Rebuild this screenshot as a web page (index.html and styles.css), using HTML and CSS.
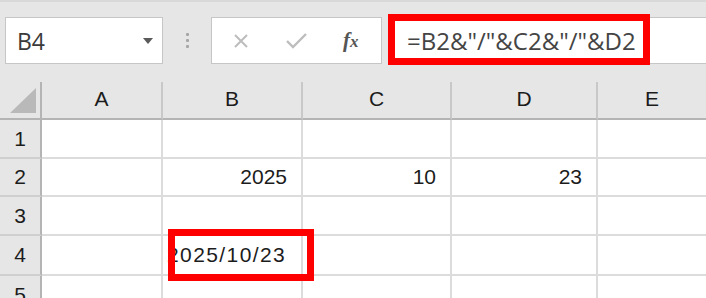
FILE: index.html
```html
<!DOCTYPE html>
<html lang="ja">
<head>
    <meta charset="UTF-8">
    <title>Excel formula</title>
    <link rel="stylesheet" href="styles.css">
</head>
<body>
    <div class="toolbar">
        <div class="name-box">
            <span>B4</span>
            <span class="drop"></span>
        </div>
        <div class="sep">
            <span class="dot"></span>
            <span class="dot"></span>
            <span class="dot"></span>
        </div>
        <div class="fx-box">
            <svg class="icon-x" width="16" height="14" viewBox="0 0 16 14">
                <path d="M2 1 L14 13 M14 1 L2 13" stroke="#bdbdbd" stroke-width="2" fill="none"/>
            </svg>
            <svg class="icon-check" width="21" height="16" viewBox="0 0 21 16">
                <path d="M1 8 L7 14 L20 1" stroke="#bdbdbd" stroke-width="2.4" fill="none"/>
            </svg>
            <span class="fx">f<span class="fx-x">x</span></span>
        </div>
        <div class="formula">
            <span class="formula-text">=B2&amp;"/"&amp;C2&amp;"/"&amp;D2</span>
            <div class="mark mark-formula"></div>
        </div>
    </div>

    <div class="sheet">
        <div class="cell corner"><span class="tri"></span></div>
        <div class="cell col-head">A</div>
        <div class="cell col-head">B</div>
        <div class="cell col-head">C</div>
        <div class="cell col-head">D</div>
        <div class="cell col-head last">E</div>

        <div class="cell row-head">1</div>
        <div class="cell"></div>
        <div class="cell"></div>
        <div class="cell"></div>
        <div class="cell"></div>
        <div class="cell last"></div>

        <div class="cell row-head">2</div>
        <div class="cell"></div>
        <div class="cell num">2025</div>
        <div class="cell num">10</div>
        <div class="cell num">23</div>
        <div class="cell last"></div>

        <div class="cell row-head">3</div>
        <div class="cell"></div>
        <div class="cell"></div>
        <div class="cell"></div>
        <div class="cell"></div>
        <div class="cell last"></div>

        <div class="cell row-head">4</div>
        <div class="cell"></div>
        <div class="cell txt">2025/10/23<div class="mark mark-cell"></div></div>
        <div class="cell"></div>
        <div class="cell"></div>
        <div class="cell last"></div>

        <div class="cell row-head">5</div>
        <div class="cell"></div>
        <div class="cell"></div>
        <div class="cell"></div>
        <div class="cell"></div>
        <div class="cell last"></div>
    </div>
</body>
</html>
```

FILE: styles.css
```css
body {
    margin: 0;
    padding: 0;
    background: #e6e6e6;
    overflow: hidden;
    font-family: "Liberation Sans", Arial, sans-serif;
}

/* formula bar */
.toolbar {
    display: flex;
    align-items: flex-start;
    height: 82px;
    padding-top: 15px;
    box-sizing: border-box;
    border-top: 2px solid #d9d9d9;
}

.name-box {
    display: flex;
    align-items: center;
    margin-left: 5px;
    width: 158px;
    height: 47px;
    padding: 0 9px 0 11px;
    box-sizing: border-box;
    background: #fff;
    border: 1px solid #c6c6c6;
    font-family: "Open Sans", sans-serif;
    font-size: 23px;
    color: #3a3a3a;
}

.drop {
    margin-left: auto;
    width: 0;
    height: 0;
    border-left: 5px solid transparent;
    border-right: 5px solid transparent;
    border-top: 6px solid #5a5a5a;
}

.sep {
    width: 48px;
    height: 47px;
    display: flex;
    flex-direction: column;
    align-items: center;
    justify-content: center;
    gap: 3px;
}

.dot {
    width: 3px;
    height: 3px;
    background: #a6a6a6;
    border-radius: 1px;
}

.fx-box {
    display: flex;
    align-items: center;
    width: 171px;
    height: 47px;
    padding-left: 21px;
    box-sizing: border-box;
    background: #fff;
    border: 1px solid #c6c6c6;
}

.icon-check {
    margin-left: 37px;
}

.fx {
    margin-left: 36px;
    font-family: "Liberation Serif", serif;
    font-style: italic;
    font-weight: bold;
    font-size: 21px;
    color: #555;
}

.fx-x {
    font-size: 17px;
}

.formula {
    position: relative;
    flex: 1;
    display: flex;
    align-items: center;
    margin-left: 6px;
    height: 47px;
    padding-left: 18px;
    box-sizing: border-box;
    background: #fff;
    border: 1px solid #c6c6c6;
    border-right: none;
    font-family: "Open Sans", sans-serif;
    font-size: 24px;
    color: #444;
}

/* red highlight boxes */
.mark {
    position: absolute;
    box-sizing: border-box;
    border: 7px solid #f00;
}

.mark-formula {
    left: -1px;
    top: -4px;
    width: 262px;
    height: 51px;
}

.mark-cell {
    left: 5px;
    top: -7px;
    width: 146px;
    height: 52px;
}

/* sheet grid */
.sheet {
    display: grid;
    grid-template-columns: 42px 121px 140px 149px 146px 1fr;
    grid-template-rows: 38px 39px 38px 39px 40px 40px;
    background: #fff;
    font-size: 21px;
    color: #1c1c1c;
}

.cell {
    display: flex;
    align-items: center;
    box-sizing: border-box;
    border-right: 2px solid #dcdcdc;
    border-bottom: 2px solid #dcdcdc;
    background: #fff;
}

.cell.last {
    border-right: none;
}

.corner {
    position: relative;
    background: #e6e6e6;
    border-right-color: #b4b4b4;
    border-bottom-color: #b4b4b4;
}

.tri {
    position: absolute;
    left: 10px;
    top: 6px;
    width: 26px;
    height: 25px;
    background: #b9b9b9;
    clip-path: polygon(100% 0, 100% 100%, 0 100%);
}

.col-head {
    justify-content: center;
    padding-bottom: 3px;
    background: #e6e6e6;
    border-right-color: #c8c8c8;
    border-bottom-color: #b4b4b4;
}

.row-head {
    justify-content: center;
    background: #e6e6e6;
    border-right-color: #b4b4b4;
    border-bottom-color: #cfcfcf;
}

.num {
    justify-content: flex-end;
    padding-right: 14px;
}

.txt {
    position: relative;
    padding-left: 4px;
    letter-spacing: 1.4px;
}
```
